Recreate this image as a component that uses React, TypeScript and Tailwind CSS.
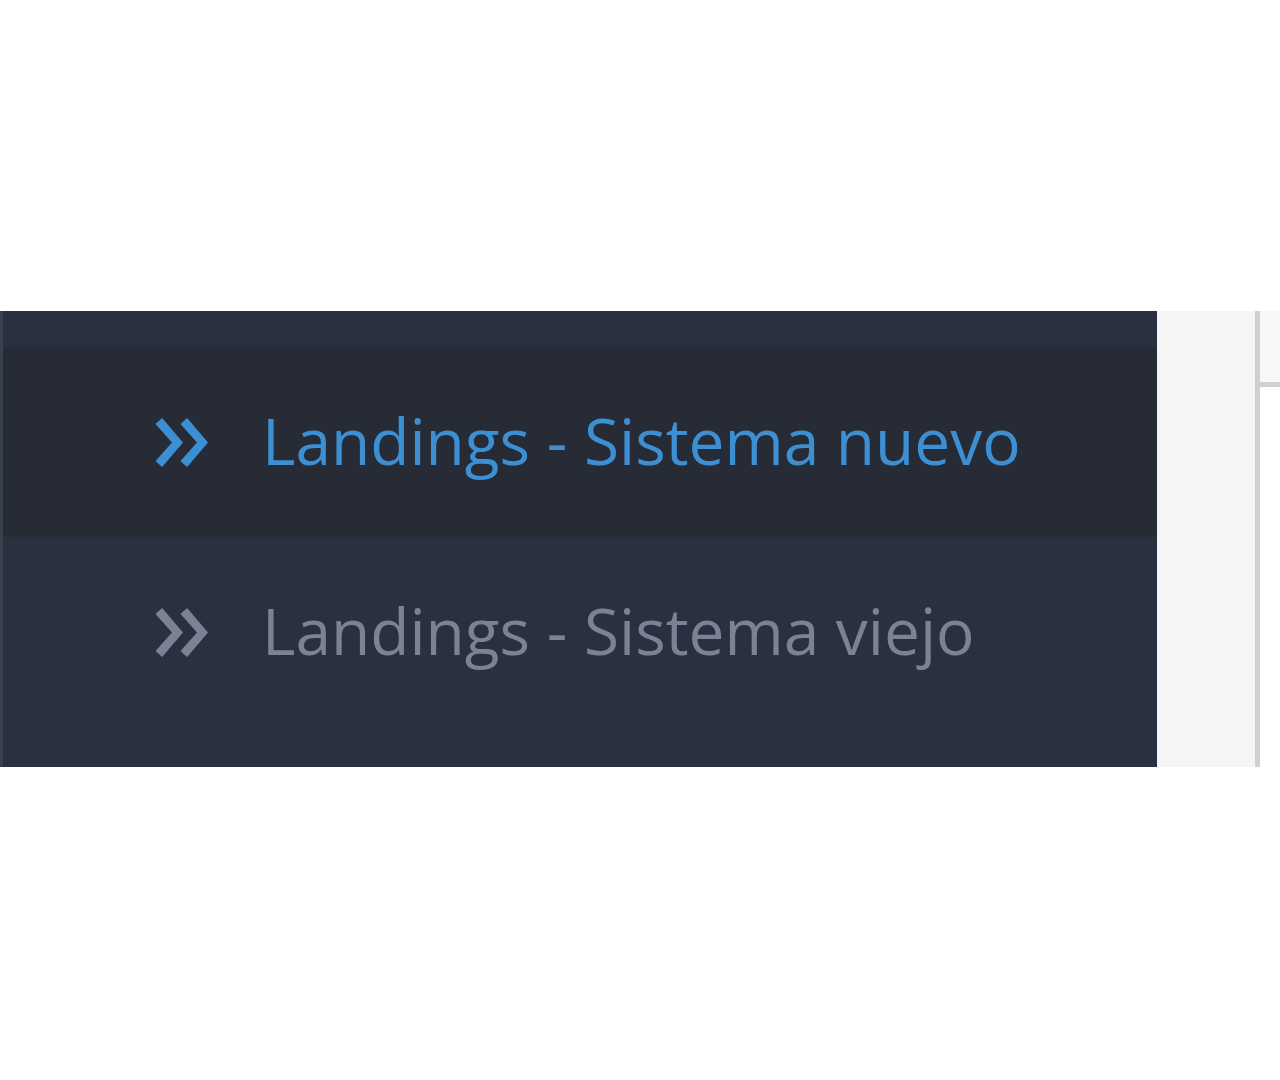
// Sidebar submenu fragment: two "Landings" links, the first one active

const items = [
  { label: "Landings - Sistema nuevo", active: true },
  { label: "Landings - Sistema viejo", active: false },
];

function DoubleAngle({ className }: { className: string }) {
  return (
    <svg
      viewBox="0 0 53 49"
      className={className}
      fill="currentColor"
      stroke="currentColor"
      strokeWidth="1.5"
      strokeLinejoin="round"
    >
      <polygon points="1.5,6 7,1 27,24.5 7,48 1.5,43 18,24.5" />
      <polygon points="26.5,6 32,1 52,24.5 32,48 26.5,43 43,24.5" />
    </svg>
  );
}

export default function App() {
  return (
    <div className="min-h-[1080px] bg-white" style={{ fontFamily: '"Open Sans", "Noto Sans", sans-serif' }}>
      <div className="h-[311px]" />

      <div className="flex h-[456px]">
        {/* sidebar */}
        <nav className="w-[1157px] border-l-[3px] border-[#3a3f4d] bg-[#2b3040]">
          <div className="h-[36px]" />
          {items.map((item) => (
            <a
              key={item.label}
              href="#"
              className={
                "flex h-[190px] items-center pl-[152px] " +
                (item.active ? "bg-[#262b35] text-[#3d8fd3]" : "text-[#7b8294]")
              }
            >
              <DoubleAngle className="h-[49px] w-[53px] shrink-0" />
              <span className="-mt-[3px] ml-[54px] whitespace-nowrap text-[64px] leading-none">
                {item.label}
              </span>
            </a>
          ))}
        </nav>

        {/* content gutter */}
        <div className="w-[98px] bg-[#f5f5f5]" />
        <div className="w-[5px] bg-[#d0d0d0]" />
        <div className="flex-1 bg-white">
          <div className="h-[76px] border-b-[5px] border-[#d0d0d0] bg-[#f7f7f7]" />
        </div>
      </div>
    </div>
  );
}
